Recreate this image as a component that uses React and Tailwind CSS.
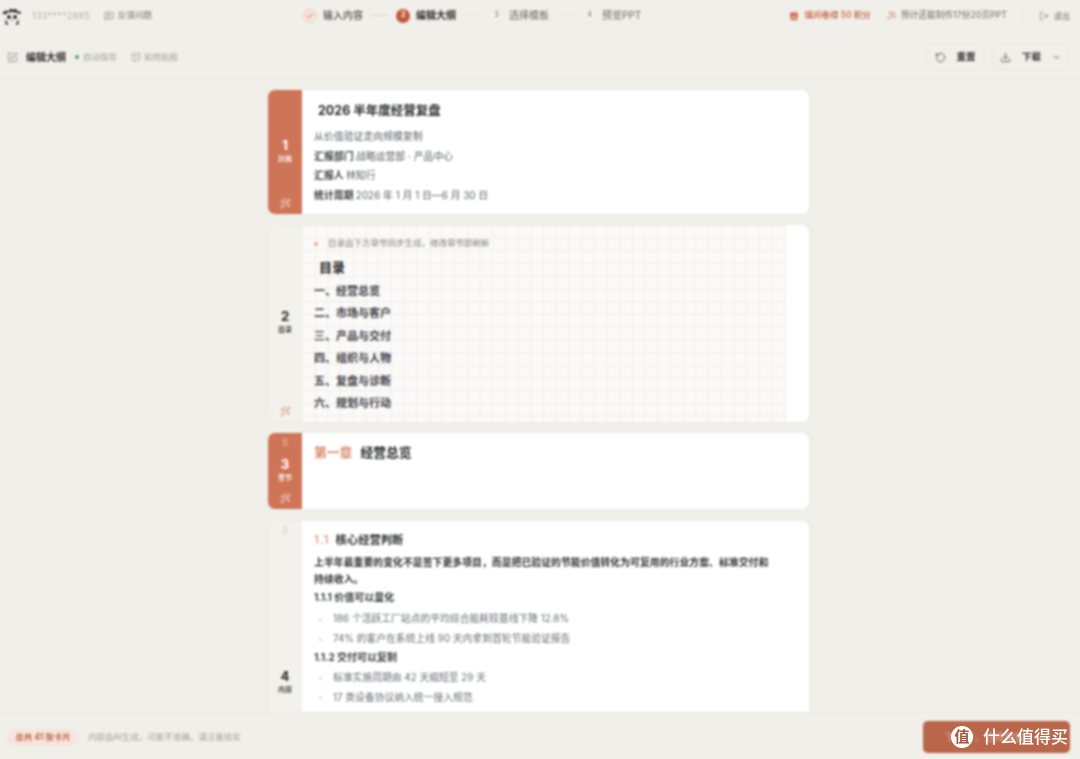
import React from 'react';
import { Check, MessageSquareText, SquarePen, ImagePlus, RotateCcw, Download, ChevronDown, LogOut, Gift, WandSparkles, GripVertical, Pickaxe } from 'lucide-react';

const FONT = "font-['Inter','Noto_Sans_CJK_SC',sans-serif]";

function Logo() {
  return (
    <svg width="20" height="17" viewBox="0 0 20 17" className="shrink-0 mt-[1px]">
      <path d="M0 5 L4 2.5 L6 3.5 L9 0.5 L11 2 L14 0.5 L15 3 L20 4.5 L17 6 L14 4.5 L10 4 L6 4.5 L3 6.5Z" fill="#2b2b2b" />
      <path d="M4 6 Q10 3.5 16 6 L16.5 15 L13 16.5 L10 15 L7 16.5 L3.5 15Z" fill="#f5f4ef" />
      <circle cx="7" cy="9" r="2" fill="#2b2b2b" />
      <circle cx="13" cy="9" r="2" fill="#2b2b2b" />
      <path d="M9 12 H11 L10 13.5Z" fill="#2b2b2b" />
      <path d="M3.5 11 L6.5 16.5 H3.5Z M16.5 11 L13.5 16.5 H16.5Z" fill="#2b2b2b" />
    </svg>
  );
}

function Step({ state, n, label }) {
  if (state === 'done') {
    return (
      <div className="flex items-center gap-[6px]">
        <span className="w-[14px] h-[14px] rounded-full bg-[#f6e3da] border border-[#eccfc2] flex items-center justify-center">
          <Check size={8} strokeWidth={3} className="text-[#c9694a]" />
        </span>
        <span className="text-[10px] font-medium text-[#55534e]">{label}</span>
      </div>
    );
  }
  if (state === 'active') {
    return (
      <div className="flex items-center gap-[6px]">
        <span className="w-[14px] h-[14px] rounded-full bg-[#c4593a] flex items-center justify-center text-[7px] font-bold text-white">{n}</span>
        <span className="text-[10px] font-bold text-[#2f2e2b]">{label}</span>
      </div>
    );
  }
  return (
    <div className="flex items-center gap-[6px]">
      <span className="w-[13px] h-[13px] rounded-full bg-[#f3f2ee] border border-[#eae9e4] flex items-center justify-center text-[7px] text-[#6b6962]">{n}</span>
      <span className="text-[10px] text-[#6b6962]">{label}</span>
    </div>
  );
}

function Side({ n, label, active, grip, spark }) {
  const tone = active ? 'bg-[#cf7557] text-white' : 'bg-[#f2f1ec] text-[#2f2e2b]';
  const third = active ? 'text-[#f6e1d8]' : 'text-[#c5c3bc]';
  return (
    <div className={`w-[34px] shrink-0 flex flex-col items-center relative ${tone}`}>
      {grip && (
        <span className={`absolute top-[4px] ${third}`}>
          <GripVertical size={10} strokeWidth={1.5} />
        </span>
      )}
      <div className="flex-1 flex flex-col items-center justify-center pb-[4px]">
        <span className="text-[13px] leading-[14px] font-bold">{n}</span>
        <span className="text-[7px] leading-[9px] mt-[2px] font-medium">{label}</span>
      </div>
      {spark && (
        <span className={`absolute bottom-[5px] ${active ? 'text-[#f8e6dd]' : 'text-[#dc8f75]'}`}>
          <WandSparkles size={11} strokeWidth={2} />
        </span>
      )}
    </div>
  );
}

function Card({ className, children }) {
  return (
    <div className={`w-[543px] shrink-0 bg-white rounded-[8px] overflow-hidden flex border border-[#ecebe6] ${className}`}>
      {children}
    </div>
  );
}

function MetaLine({ k, v }) {
  return (
    <p className="text-[9.9px] leading-[19.7px] text-[#5b5e66]">
      {k && <b className="font-bold text-[#3a3c42]">{k} </b>}
      {v}
    </p>
  );
}

function Bullet({ children }) {
  return (
    <div className="flex items-center h-[19.4px] text-[9.8px] text-[#6a6d75] pl-[5px]">
      <span className="w-[3px] h-[3px] rounded-full bg-[#dedcd6] mr-[11px]" />
      <span>{children}</span>
    </div>
  );
}

export default function App() {
  const toc = ['一、经营总览', '二、市场与客户', '三、产品与交付', '四、组织与人物', '五、复盘与诊断', '六、规划与行动'];
  return (
    <div className={`w-[1080px] h-[759px] overflow-hidden bg-[#f0efea] relative ${FONT}`}>
      <div className="w-full h-full flex flex-col blur-[0.8px]">
        {/* top bar */}
        <header className="h-[31px] shrink-0 flex items-center pl-[2px] pr-[10px] mb-[6px]">
          <Logo />
          <span className="ml-[10px] text-[9px] tracking-[0.3px] text-[#b5b3ac]">133****2885</span>
          <span className="ml-[14px] flex items-center gap-[4px] text-[8.5px] text-[#77756e]">
            <MessageSquareText size={10} strokeWidth={1.4} /> 反馈问题
          </span>
          <div className="ml-[151px] flex items-center">
            <Step state="done" label="输入内容" />
            <span className="w-[17px] h-px bg-[#ecd3c8] mx-[8px]" />
            <Step state="active" n="2" label="编辑大纲" />
            <span className="w-[17px] h-px bg-[#e9e8e2] mx-[8px]" />
            <div className="ml-[1px]"><Step n="3" label="选择模板" /></div>
            <span className="w-[18px] h-px bg-[#e9e8e2] mx-[8px]" />
            <Step n="4" label="预览PPT" />
          </div>
          <div className="ml-auto flex items-center">
            <Gift size={10} strokeWidth={2.4} className="text-[#c4593a] fill-[#e8a58d]" />
            <span className="ml-[6px] text-[8.5px] font-medium text-[#c4593a]">填问卷得 50 积分</span>
            <Pickaxe size={9} strokeWidth={1.6} className="ml-[16px] text-[#cf7557]" />
            <span className="ml-[5px] text-[8.75px] text-[#6d6b65]">预计还能制作17份20页PPT</span>
            <span className="w-px h-[11px] bg-[#e6e5df] ml-[15px]" />
            <LogOut size={10} strokeWidth={1.4} className="ml-[16px] text-[#6d6b65]" />
            <span className="ml-[5px] text-[8px] text-[#6d6b65]">退出</span>
          </div>
        </header>

        {/* tool bar */}
        <div className="h-[41px] shrink-0 flex items-center border-b border-[#e9e8e2] pl-[7px] pr-[11px]">
          <SquarePen size={11} strokeWidth={1.4} className="text-[#6f6d66]" />
          <span className="ml-[8px] text-[10px] font-bold text-[#2f2e2b]">编辑大纲</span>
          <span className="ml-[9px] w-[4px] h-[4px] rounded-full bg-[#4fa86a]" />
          <span className="ml-[4px] text-[8.5px] text-[#a09e97]">自动保存</span>
          <ImagePlus size={10} strokeWidth={1.4} className="ml-[14px] text-[#95938c]" />
          <span className="ml-[3px] text-[8.5px] text-[#a09e97]">如何贴图</span>
          <div className="ml-auto flex items-center gap-[7px]">
            <button className="h-[26px] w-[59px] rounded-[6px] border border-[#e8e7e1] flex items-center justify-center gap-[10px] text-[9.5px] font-semibold text-[#3a3936]">
              <RotateCcw size={11} strokeWidth={1.6} /> 重置
            </button>
            <button className="h-[26px] w-[77px] rounded-[6px] border border-[#e8e7e1] flex items-center justify-center gap-[11px] text-[9.5px] font-semibold text-[#3a3936]">
              <Download size={11} strokeWidth={1.6} /> 下载 <ChevronDown size={9} strokeWidth={2} />
            </button>
          </div>
        </div>

        {/* card list */}
        <main className="flex-1 min-h-0 overflow-hidden flex flex-col items-center gap-[9px] pt-[11px] pr-[3px] border-b border-[#e9e8e2]">
          <Card className="h-[126px]">
            <Side n="1" label="封面" active spark />
            <div className="flex-1 pl-[12px] pt-[12px]">
              <h1 className="pl-[4px] text-[12.5px] leading-[18px] font-bold text-[#26272b] mb-[7px]">2026 半年度经营复盘</h1>
              <MetaLine v="从价值验证走向规模复制" />
              <MetaLine k="汇报部门" v="战略运营部 · 产品中心" />
              <MetaLine k="汇报人" v="林知行" />
              <MetaLine k="统计周期" v="2026 年 1 月 1 日—6 月 30 日" />
            </div>
          </Card>

          <Card className="h-[199px]">
            <Side n="2" label="目录" spark />
            <div className="w-[484px] bg-[#fbfaf8] bg-[linear-gradient(#efeee9_1px,transparent_1px),linear-gradient(90deg,#efeee9_1px,transparent_1px)] bg-[size:12.7px_12.7px] pl-[12px] pt-[12px]">
              <div className="flex items-center text-[8.5px] leading-[13px] text-[#85837d]">
                <span className="w-[4px] h-[4px] bg-[#eeb7a5] mr-[10px]" />
                目录由下方章节同步生成，修改章节即刷新
              </div>
              <h2 className="pl-[5px] mt-[8px] text-[13px] leading-[18px] font-bold text-[#26272b] mb-[4px]">目录</h2>
              {toc.map((t) => (
                <p key={t} className="text-[11px] leading-[22.4px] font-semibold text-[#3e4047]">{t}</p>
              ))}
            </div>
          </Card>

          <Card className="h-[78px]">
            <Side n="3" label="章节" active grip spark />
            <div className="flex-1 pl-[12px] pt-[11px] flex items-center gap-[8px] self-start text-[12.8px] leading-[18px] font-bold">
              <span className="text-[#d98b70]">第一章</span>
              <span className="text-[#26272b]">经营总览</span>
            </div>
          </Card>

          <Card className="h-[326px] mt-[1px]">
            <Side n="4" label="内容" grip />
            <div className="flex-1 pl-[12px] pr-[36px] pt-[10px]">
              <div className="flex items-center gap-[6px] h-[18px] mb-[5px]">
                <span className="text-[12px] font-medium tracking-[1px] text-[#dc9a82]">1.1</span>
                <span className="text-[11.3px] font-bold text-[#2f3035]">核心经营判断</span>
              </div>
              <p className="text-[9.9px] leading-[17px] font-bold text-[#2f3035]">上半年最重要的变化不是签下更多项目，而是把已验证的节能价值转化为可复用的行业方案、标准交付和持续收入。</p>
              <p className="text-[10px] leading-[18px] font-bold text-[#3a3c42] mb-[4px]">1.1.1 价值可以量化</p>
              <Bullet>186 个活跃工厂站点的平均综合能耗较基线下降 12.8%</Bullet>
              <Bullet>74% 的客户在系统上线 90 天内拿到首轮节能验证报告</Bullet>
              <p className="text-[10px] leading-[18px] font-bold text-[#3a3c42] mb-[3px] mt-[-1px]">1.1.2 交付可以复制</p>
              <Bullet>标准实施周期由 42 天缩短至 29 天</Bullet>
              <Bullet>17 类设备协议纳入统一接入规范</Bullet>
            </div>
          </Card>
        </main>

        {/* footer */}
        <footer className="h-[46px] shrink-0 flex items-center pl-[7px] pr-[10px] pt-[2px]">
          <span className="h-[17px] w-[72px] rounded-full bg-[#f6e5dd] flex items-center justify-center text-[8.5px] font-bold text-[#bf6a4c]">总共 41 张卡片</span>
          <span className="ml-[9px] text-[8.5px] text-[#a09e97]">内容由AI生成，可能不准确，请注意核实</span>
          <button className="ml-auto w-[147px] h-[32px] rounded-[5px] bg-[#b9664a] text-[10px] font-medium text-[#d3a391] pr-[24px]">下一步，选择模板</button>
        </footer>
      </div>

      {/* watermark */}
      <div className="absolute left-[951px] top-[726px] flex items-center gap-[10px] text-white">
        <span className="w-[22px] h-[22px] rounded-full bg-white flex items-center justify-center text-[15px] font-bold text-[#a8543a]">值</span>
        <span className="text-[17px] leading-[22px] font-medium">什么值得买</span>
      </div>
    </div>
  );
}
